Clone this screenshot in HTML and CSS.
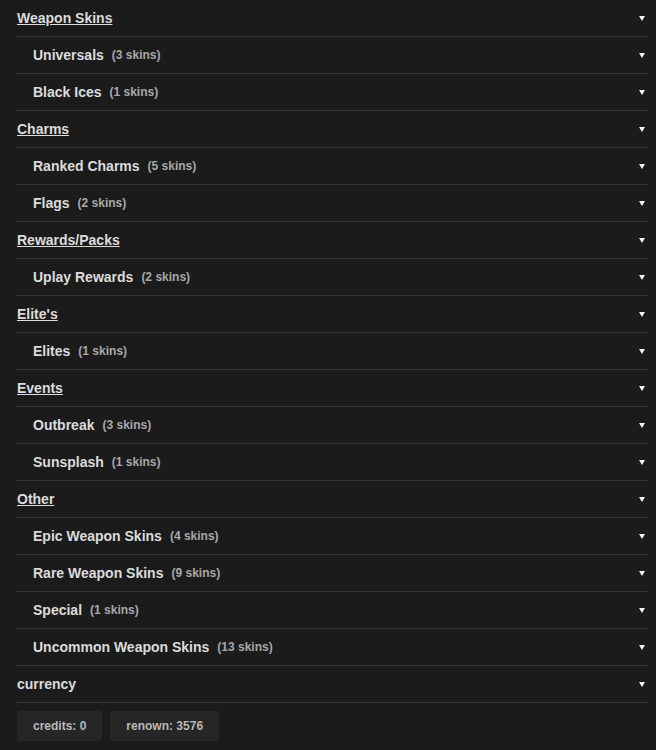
FILE: index.html
```html
<!DOCTYPE html>
<html lang="en">
<head>
    <meta charset="UTF-8">
    <meta name="viewport" content="width=device-width, initial-scale=1.0">
    <title>Skins</title>
    <link rel="stylesheet" href="styles.css">
</head>
<body>
    <div class="skin-list">
        <div class="row heading"><span class="title">Weapon Skins</span><span class="arrow"></span></div>
        <div class="row sub"><span class="title">Universals</span><span class="count">(3 skins)</span><span class="arrow"></span></div>
        <div class="row sub"><span class="title">Black Ices</span><span class="count">(1 skins)</span><span class="arrow"></span></div>

        <div class="row heading"><span class="title">Charms</span><span class="arrow"></span></div>
        <div class="row sub"><span class="title">Ranked Charms</span><span class="count">(5 skins)</span><span class="arrow"></span></div>
        <div class="row sub"><span class="title">Flags</span><span class="count">(2 skins)</span><span class="arrow"></span></div>

        <div class="row heading"><span class="title">Rewards/Packs</span><span class="arrow"></span></div>
        <div class="row sub"><span class="title">Uplay Rewards</span><span class="count">(2 skins)</span><span class="arrow"></span></div>

        <div class="row heading"><span class="title">Elite's</span><span class="arrow"></span></div>
        <div class="row sub"><span class="title">Elites</span><span class="count">(1 skins)</span><span class="arrow"></span></div>

        <div class="row heading"><span class="title">Events</span><span class="arrow"></span></div>
        <div class="row sub"><span class="title">Outbreak</span><span class="count">(3 skins)</span><span class="arrow"></span></div>
        <div class="row sub"><span class="title">Sunsplash</span><span class="count">(1 skins)</span><span class="arrow"></span></div>

        <div class="row heading"><span class="title">Other</span><span class="arrow"></span></div>
        <div class="row sub"><span class="title">Epic Weapon Skins</span><span class="count">(4 skins)</span><span class="arrow"></span></div>
        <div class="row sub"><span class="title">Rare Weapon Skins</span><span class="count">(9 skins)</span><span class="arrow"></span></div>
        <div class="row sub"><span class="title">Special</span><span class="count">(1 skins)</span><span class="arrow"></span></div>
        <div class="row sub"><span class="title">Uncommon Weapon Skins</span><span class="count">(13 skins)</span><span class="arrow"></span></div>

        <div class="row plain"><span class="title">currency</span><span class="arrow"></span></div>
        <div class="currency">
            <span class="pill">credits: 0</span>
            <span class="pill">renown: 3576</span>
        </div>
    </div>
</body>
</html>
```

FILE: styles.css
```css
body {
    margin: 0;
    background-color: #1b1b1b;
    font-family: "Liberation Sans", Arial, sans-serif;
    color: #dcdcdc;
}
.skin-list {
    padding: 0 8px 0 16px;
}
.row {
    display: flex;
    align-items: center;
    height: 36px;
    border-bottom: 1px solid #363636;
    font-size: 14px;
    font-weight: bold;
}
.row .title {
    padding-left: 1px;
}
.heading .title {
    text-decoration: underline;
}
.sub .title {
    padding-left: 17px;
}
.count {
    margin-left: 8px;
    font-size: 12px;
    color: #a8a8a8;
}
.arrow {
    margin-left: auto;
    margin-right: 3px;
    width: 0;
    height: 0;
    border-left: 3px solid transparent;
    border-right: 3px solid transparent;
    border-top: 5px solid #f2f2f2;
}
.currency {
    display: flex;
    gap: 8px;
    padding: 8px 0 0 1px;
}
.pill {
    background-color: #262626;
    color: #b8b8b8;
    font-size: 12px;
    font-weight: bold;
    padding: 8px 16px;
    border-radius: 3px;
}
```
